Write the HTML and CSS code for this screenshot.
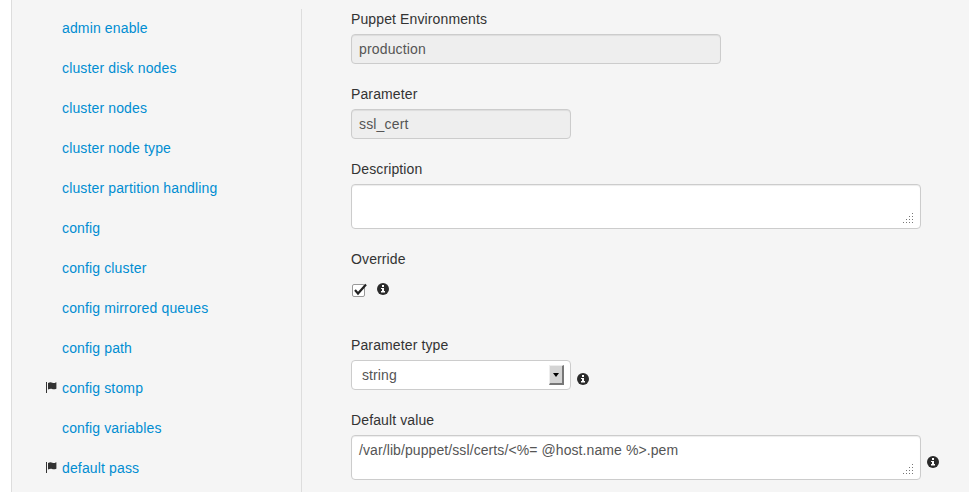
FILE: index.html
```html
<!DOCTYPE html>
<html lang="en">
<head>
<meta charset="utf-8">
<title>Smart class parameter</title>
<link rel="stylesheet" href="styles.css">
</head>
<body>
<svg class="defs" aria-hidden="true">
  <symbol id="flag" viewBox="0 0 11 12"><path d="M0 0h1v11H0zM2 1C4 0 5 .1 6.400 .8S8.600 .9 10.400 .2V6.700C8.400 7.500 7.300 7.400 6 6.900S3.700 6.800 2 7.600z"/></symbol>
  <symbol id="info" viewBox="0 0 12 12"><circle cx="6" cy="6" r="6"/><path fill="#fff" d="M5 2h2v2H5zM4 5h3v3h1v1.500H4V8h1V6H4z"/></symbol>
  <symbol id="grip" viewBox="0 0 10 10"><path d="M9 0h1v1H9zM6 3h1v1H6zM9 3h1v1H9zM3 6h1v1H3zM6 6h1v1H6zM9 6h1v1H9zM0 9h1v1H0zM3 9h1v1H3zM6 9h1v1H6zM9 9h1v1H9z"/></symbol>
</svg>
<main class="panel">
  <nav class="params">
    <a href="#">admin enable</a>
    <a href="#">cluster disk nodes</a>
    <a href="#">cluster nodes</a>
    <a href="#">cluster node type</a>
    <a href="#">cluster partition handling</a>
    <a href="#">config</a>
    <a href="#">config cluster</a>
    <a href="#">config mirrored queues</a>
    <a href="#">config path</a>
    <a href="#"><svg class="flag"><use href="#flag"/></svg>config stomp</a>
    <a href="#">config variables</a>
    <a href="#"><svg class="flag"><use href="#flag"/></svg>default pass</a>
  </nav>
  <form class="details">
    <div class="field">
      <label>Puppet Environments</label>
      <div class="control wide disabled">production</div>
    </div>
    <div class="field">
      <label>Parameter</label>
      <div class="control disabled">ssl_cert</div>
    </div>
    <div class="field">
      <label>Description</label>
      <div class="control area"><svg class="grip"><use href="#grip"/></svg></div>
    </div>
    <div class="field override">
      <label>Override</label>
      <div class="check-row">
        <svg class="check" viewBox="0 0 15 14"><rect x=".5" y="1.500" width="12" height="12" rx="1.500" fill="#fff" stroke="#999"/><path d="M3 7l3 3.500L14 1.500" fill="none" stroke="#222" stroke-width="2.200"/></svg>
        <svg class="info"><use href="#info"/></svg>
      </div>
    </div>
    <div class="field">
      <label>Parameter type</label>
      <div class="row">
        <div class="control select">string<span class="arrow"></span></div>
        <svg class="info"><use href="#info"/></svg>
      </div>
    </div>
    <div class="field">
      <label>Default value</label>
      <div class="row">
        <div class="control area">/var/lib/puppet/ssl/certs/&lt;%= @host.name %&gt;.pem<svg class="grip"><use href="#grip"/></svg></div>
        <svg class="info"><use href="#info"/></svg>
      </div>
    </div>
  </form>
</main>
</body>
</html>
```
FILE: styles.css
```css
* { box-sizing: border-box; }
body {
  margin: 0;
  height: 492px;
  overflow: hidden;
  background: #fff;
  color: #333;
  font: 14px/20px "Liberation Sans", Arial, sans-serif;
}
.defs { display: none; }
svg { display: block; flex: none; }
.panel {
  display: flex;
  height: 492px;
  margin-left: 11px;
  padding-top: 9px;
  border-left: 1px solid #ddd;
  background: #f5f5f5;
}
.params {
  width: 290px;
  height: 483px;
  border-right: 1px solid #ddd;
}
.params a {
  display: flex;
  align-items: center;
  height: 40px;
  padding-left: 50px;
  color: #008dd2;
  letter-spacing: .14px;
  text-decoration: none;
}
.params a:first-child { margin-top: -1px; }
.flag {
  width: 11px;
  height: 12px;
  margin: -1px 5px 0 -16px;
  fill: #333;
}
.details { margin-left: 49px; }
.field { margin-bottom: 20px; }
.field label { display: block; margin-bottom: 5px; letter-spacing: .12px; }
.row { display: flex; align-items: flex-end; }
.control {
  position: relative;
  width: 220px;
  height: 30px;
  padding: 4px 7px;
  border: 1px solid #ccc;
  border-radius: 4px;
  background: #fff;
  color: #555;
  letter-spacing: .09px;
  box-shadow: inset 0 1px 1px rgba(0, 0, 0, .075);
}
.wide { width: 370px; }
.disabled { background: #eee; letter-spacing: .16px; }
.area { width: 570px; height: 45px; }
.grip {
  position: absolute;
  right: 7px;
  bottom: 5px;
  width: 10px;
  height: 10px;
  fill: #777;
}
.info { width: 12px; height: 12px; fill: #2b2b2b; }
.row .info { margin: 0 0 5px 6px; }
.row .area + .info { margin-bottom: 12px; }
.override { height: 66px; }
.check-row { display: flex; padding: 9px 0 0 1px; }
.check { width: 15px; height: 14px; }
.check-row .info { margin-left: 10px; }
.select {
  display: flex;
  justify-content: space-between;
  padding: 4px 6px 4px 10px;
  box-shadow: none;
}
.arrow {
  display: flex;
  align-items: center;
  justify-content: center;
  width: 15px;
  height: 20px;
  border: 1px solid;
  border-color: #eee #777 #777 #eee;
  border-right-width: 2px;
  border-bottom-width: 2px;
  background: #d4d4d4;
}
.arrow::after {
  content: "";
  border: 3px solid transparent;
  border-top: 4px solid #000;
  border-bottom: 0;
}
```
